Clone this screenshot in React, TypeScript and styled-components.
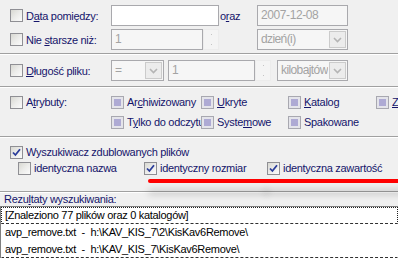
import React from 'react';
import styled, { createGlobalStyle } from 'styled-components';

const GlobalStyle = createGlobalStyle`
	html, body {
		margin: 0;
		padding: 0;
		background: #f0f0f0;
	}
	body {
		font-family: 'Liberation Sans', Arial, sans-serif;
		font-size: 11px;
		letter-spacing: -0.3px;
		color: #15156b;
	}
`;

const Page = styled.div`
	width: 398px;
	height: 258px;
	overflow: hidden;
	background: #f0f0f0;
	display: flex;
	flex-direction: column;
`;

const Section = styled.div<{ $pt: number; $pb: number; $gap?: number }>`
	padding: ${(p) => p.$pt}px 0 ${(p) => p.$pb}px 10px;
	display: flex;
	flex-direction: column;
	gap: ${(p) => p.$gap ?? 0}px;
`;

const Separator = styled.div`
	height: 0;
	border-top: 1px solid #a0a0a0;
	border-bottom: 1px solid #ffffff;
`;

const DateRow = styled.div`
	display: grid;
	grid-template-columns: 101px 92px 16px 38px 91px;
	height: 21px;
	align-items: center;
`;

const SizeRow = styled.div`
	display: grid;
	grid-template-columns: 101px 53px 91px 16px 77px;
	height: 21px;
	align-items: center;
	& > :nth-child(3) {
		margin-left: 4px;
	}
	& > :nth-child(5) {
		margin-left: 6px;
	}
`;

const AttrRow = styled.div`
	display: grid;
	grid-template-columns: 101px 90px 87px 88px 80px;
	height: 16px;
	align-items: center;
	white-space: nowrap;
`;

const Label = styled.label`
	display: flex;
	align-items: center;
	gap: 3px;
	white-space: nowrap;
	height: 16px;
	line-height: 16px;
	cursor: default;
`;

const Option = styled.label<{ $mark?: 'short' | 'long' }>`
	position: relative;
	display: flex;
	align-items: center;
	gap: 3px;
	white-space: nowrap;
	height: 16px;
	line-height: 16px;
	&::after {
		content: '';
		display: ${(p) => (p.$mark ? 'block' : 'none')};
		position: absolute;
		left: ${(p) => (p.$mark === 'long' ? -3 : 4)}px;
		right: ${(p) => (p.$mark === 'long' ? -7 : -2)}px;
		bottom: -7px;
		height: 4px;
		border-radius: 3px;
		background: #ff0000;
		box-shadow: 0 11px 7px rgba(0, 0, 0, 0.22);
	}
`;

const Accel = styled.span`
	text-decoration: underline;
	text-underline-offset: 1px;
`;

const Box = styled.span<{ $attr?: boolean }>`
	flex: none;
	box-sizing: border-box;
	width: 13px;
	height: 13px;
	border: 1px solid ${(p) => (p.$attr ? '#a8a8b0' : '#8f8f94')};
	background: ${(p) =>
		p.$attr
			? '#aeaad4'
			: 'linear-gradient(135deg, #d8d8d2 0%, #ececea 50%, #fbfbfb 100%)'};
	box-shadow: ${(p) => (p.$attr ? 'inset 0 0 0 2px #e4e4ea' : 'none')};
	display: inline-flex;
	align-items: center;
	justify-content: center;
`;

const Field = styled.div<{ $white?: boolean }>`
	box-sizing: border-box;
	height: 21px;
	border: 1px solid #a9a9ad;
	background: ${(p) => (p.$white ? '#ffffff' : '#f6f6f6')};
	color: #a3a3a3;
	padding: 0 3px;
	line-height: 19px;
	font-size: 12px;
	letter-spacing: -0.4px;
	white-space: nowrap;
	overflow: hidden;
`;

const Combo = styled(Field)`
	display: flex;
	align-items: center;
	gap: 1px;
	padding: 0 1px 0 3px;
	letter-spacing: -0.6px;
`;

const ComboText = styled.span`
	flex: 1;
	min-width: 0;
	overflow: hidden;
`;

const ArrowButton = styled.span`
	box-sizing: border-box;
	width: 17px;
	height: 17px;
	flex: none;
	border: 1px solid #cbcbcb;
	background: #ececec;
	display: flex;
	align-items: center;
	justify-content: center;
`;

const Spin = styled.div`
	box-sizing: border-box;
	height: 21px;
	display: flex;
	flex-direction: column;
	border: 1px solid #ececec;
	background: #f4f4f4;
`;

const SpinHalf = styled.span`
	flex: 1;
	display: flex;
	align-items: center;
	justify-content: center;
	&::before {
		content: '';
		width: 1px;
		height: 1px;
		background: #c4c4c4;
	}
`;

const Oraz = styled.span`
	padding-left: 1px;
`;

const SubRow = styled.div`
	display: grid;
	grid-template-columns: 126px 123px auto;
	padding-left: 8px;
	height: 16px;
	align-items: center;
`;

const ResultsTitle = styled.div`
	padding: 0 0 0 4px;
	height: 13px;
	line-height: 13px;
	color: #15156b;
`;

const ListBox = styled.div`
	flex: 1;
	background: #ffffff;
	border-top: 1px solid #7f7f7f;
	border-left: 1px solid #7f7f7f;
	color: #000000;
`;

const ListRow = styled.div<{ $focus?: boolean; $dashed?: boolean }>`
	box-sizing: border-box;
	height: 17px;
	line-height: 15px;
	padding-left: 3px;
	white-space: nowrap;
	border: 1px dotted ${(p) => (p.$focus ? '#202020' : 'transparent')};
	border-bottom: 1px ${(p) => (p.$focus || p.$dashed ? 'dashed #303030' : 'solid transparent')};
`;

function Chevron() {
	return (
		<svg width="9" height="6" viewBox="0 0 9 6">
			<path d="M1 1 L4.5 4.5 L8 1" fill="none" stroke="#b4b4b4" strokeWidth="1.6" />
		</svg>
	);
}

function Check() {
	return (
		<svg width="9" height="9" viewBox="0 0 9 9">
			<path d="M1 4.5 L3.4 7 L8 1.2" fill="none" stroke="#2a3c9a" strokeWidth="1.8" />
		</svg>
	);
}

function CheckBox({ checked, attr }: { checked?: boolean; attr?: boolean }) {
	return <Box $attr={attr}>{checked && <Check />}</Box>;
}

function SpinBox() {
	return (
		<Spin>
			<SpinHalf />
			<SpinHalf />
		</Spin>
	);
}

function ComboBox({ value }: { value: string }) {
	return (
		<Combo>
			<ComboText>{value}</ComboText>
			<ArrowButton>
				<Chevron />
			</ArrowButton>
		</Combo>
	);
}

export default function App() {
	return (
		<Page>
			<GlobalStyle />
			<Section $pt={5} $pb={3} $gap={3}>
				<DateRow>
					<Label>
						<CheckBox />
						<span>
							D<Accel>a</Accel>ta pomiędzy:
						</span>
					</Label>
					<Field $white style={{ gridColumn: 'span 2' }} />
					<Oraz>
						o<Accel>r</Accel>az
					</Oraz>
					<Field>2007-12-08</Field>
				</DateRow>
				<DateRow>
					<Label>
						<CheckBox />
						<span>
							Nie <Accel>s</Accel>tarsze niż:
						</span>
					</Label>
					<Field>1</Field>
					<SpinBox />
					<span />
					<ComboBox value="dzień(i)" />
				</DateRow>
			</Section>
			<Separator />
			<Section $pt={5} $pb={5}>
				<SizeRow>
					<Label>
						<CheckBox />
						<span>
							<Accel>D</Accel>ługość pliku:
						</span>
					</Label>
					<ComboBox value="=" />
					<Field>1</Field>
					<SpinBox />
					<ComboBox value="kilobajtów" />
				</SizeRow>
			</Section>
			<Separator />
			<Section $pt={6} $pb={6} $gap={4}>
				<AttrRow>
					<Label>
						<CheckBox />
						<span>
							A<Accel>t</Accel>rybuty:
						</span>
					</Label>
					<Label>
						<CheckBox attr />
						<span>
							Ar<Accel>c</Accel>hiwizowany
						</span>
					</Label>
					<Label>
						<CheckBox attr />
						<span>
							<Accel>U</Accel>kryte
						</span>
					</Label>
					<Label>
						<CheckBox attr />
						<span>
							<Accel>K</Accel>atalog
						</span>
					</Label>
					<Label>
						<CheckBox attr />
						<span>
							<Accel>Z</Accel>
						</span>
					</Label>
				</AttrRow>
				<AttrRow>
					<span />
					<Label>
						<CheckBox attr />
						<span>
							T<Accel>y</Accel>lko do odczytu
						</span>
					</Label>
					<Label>
						<CheckBox attr />
						<span>
							Syste<Accel>m</Accel>owe
						</span>
					</Label>
					<Label>
						<CheckBox attr />
						<span>Spakowane</span>
					</Label>
				</AttrRow>
			</Section>
			<Separator />
			<Section $pt={6} $pb={15}>
				<Label>
					<CheckBox checked />
					<span>Wyszukiwacz zdublowanych plików</span>
				</Label>
				<SubRow>
					<Option>
						<CheckBox />
						<span>identyczna nazwa</span>
					</Option>
					<Option $mark="short">
						<CheckBox checked />
						<span>identyczny rozmiar</span>
					</Option>
					<Option $mark="long">
						<CheckBox checked />
						<span>identyczna zawartość</span>
					</Option>
				</SubRow>
			</Section>
			<Separator />
			<ResultsTitle>
				Rezu<Accel>l</Accel>taty wyszukiwania:
			</ResultsTitle>
			<ListBox>
				<ListRow $focus>[Znaleziono 77 plików oraz 0 katalogów]</ListRow>
				<ListRow>avp_remove.txt &nbsp;- &nbsp;h:\KAV_KIS_7\2\KisKav6Remove\</ListRow>
				<ListRow $dashed>avp_remove.txt &nbsp;- &nbsp;h:\KAV_KIS_7\KisKav6Remove\</ListRow>
			</ListBox>
		</Page>
	);
}
